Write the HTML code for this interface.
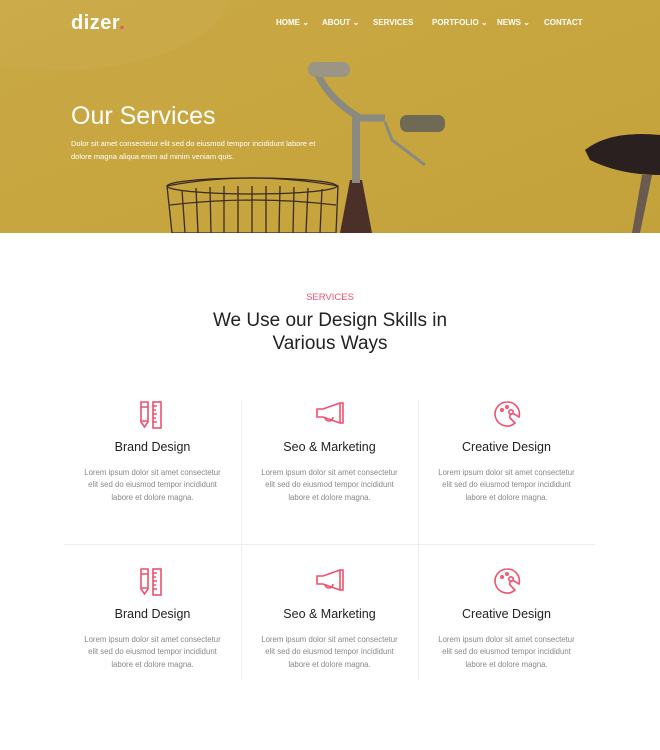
<!DOCTYPE html>
<html><head><meta charset="utf-8"><style>
*{margin:0;padding:0;box-sizing:border-box}
body{width:660px;height:750px;background:#fff;font-family:"Liberation Sans",sans-serif;position:relative;overflow:hidden}
.hero{position:absolute;left:0;top:0;width:660px;height:233px;background:linear-gradient(160deg,#c9a945 0%,#c7a53f 50%,#c4a23b 100%);overflow:hidden}
.logo{position:absolute;left:71px;top:12px;color:#fff;font-size:20px;font-weight:bold;letter-spacing:0.5px}
.logo span{color:#f0506e}
.nav{position:absolute;top:18px;color:#fff;font-size:8px;font-weight:bold}
h1{position:absolute;left:71px;top:102px;color:#fff;font-size:25px;font-weight:normal}
.sub{position:absolute;left:71px;top:138px;color:#fff;font-size:7.5px;line-height:12.5px}
.tag{position:absolute;top:292px;width:660px;text-align:center;color:#f0506e;font-size:9.5px}
h2{position:absolute;top:309px;width:660px;text-align:center;color:#222;font-size:19px;font-weight:normal;line-height:23px}
.card{position:absolute;width:177px;text-align:center}
.card h3{font-size:12.5px;font-weight:normal;color:#222;margin-top:11px}
.card p{font-size:7.8px;color:#888;line-height:12.3px;margin-top:13px}
.icon{display:block;margin:0 auto;height:30px}
.vl{position:absolute;width:1px;background:#eee}
</style></head><body>
<div class="hero">
<svg width="660" height="233" style="position:absolute;left:0;top:0">
<ellipse cx="60" cy="-10" rx="170" ry="80" fill="#cfb053" opacity="0.35"/>
<g stroke="#3a2a22" stroke-width="1.3" fill="none">
<path d="M167 186 Q250 170 338 186 L336 233 L172 233 Z"/>
<ellipse cx="252" cy="186" rx="85" ry="8"/>
<path d="M182 190L185 233M196 188L198 233M210 187L211 233M224 186L224 233M238 186L238 233M252 186L252 233M266 186L266 233M280 186L279 233M294 187L293 233M308 188L306 233M322 189L320 233M170 205Q252 195 336 205"/>
</g>
<path d="M340 233L350 180L362 180L372 233Z" fill="#4a3028"/>
<rect x="352" y="118" width="8" height="65" fill="#8a8a80"/>
<path d="M318 75Q330 100 360 118L385 118" stroke="#8a8a80" stroke-width="7" fill="none"/>
<rect x="308" y="62" width="42" height="15" rx="7" fill="#9a9585"/>
<rect x="400" y="115" width="45" height="17" rx="7" fill="#6e6a55"/>
<path d="M385 122L392 140L425 165" stroke="#8a8a80" stroke-width="3" fill="none"/>
<path d="M585 150Q610 130 660 135L660 175Q620 175 590 160Z" fill="#2a2020"/>
<path d="M642 175L632 233L640 233L652 175Z" fill="#6a5a50"/>
</svg>
<div class="logo">dizer<span>.</span></div>
<div class="nav" style="left:276px">HOME ⌄</div>
<div class="nav" style="left:322px">ABOUT ⌄</div>
<div class="nav" style="left:373px">SERVICES</div>
<div class="nav" style="left:432px">PORTFOLIO ⌄</div>
<div class="nav" style="left:497px">NEWS ⌄</div>
<div class="nav" style="left:544px">CONTACT</div>
<h1>Our Services</h1>
<div class="sub">Dolor sit amet consectetur elit sed do eiusmod tempor incididunt labore et<br>dolore magna aliqua enim ad minim veniam quis.</div>
</div>
<div class="tag">SERVICES</div>
<h2>We Use our Design Skills in<br>Various Ways</h2>
<div class="vl" style="left:241px;top:400px;height:280px"></div>
<div class="vl" style="left:418px;top:400px;height:280px"></div>
<div style="position:absolute;left:64px;top:544px;width:531px;height:1px;background:#eee"></div>

<div class="card" style="left:64px;top:399px">
<svg class="icon" width="30" height="30" viewBox="0 0 30 30" fill="none" stroke="#f0506e" stroke-width="1.6"><path d="M3 3h7v20l-3.5 5l-3.5-5z M3 8h7 M3 22h7"/><rect x="15" y="3" width="8" height="26"/><path d="M15 7h4M15 11h3M15 15h4M15 19h3M15 23h4"/></svg>
<h3>Brand Design</h3><p>Lorem ipsum dolor sit amet consectetur<br>elit sed do eiusmod tempor incididunt<br>labore et dolore magna.</p></div>
<div class="card" style="left:241px;top:399px">
<svg class="icon" width="30" height="30" viewBox="0 0 30 30" fill="none" stroke="#f0506e" stroke-width="1.6"><path d="M2 10h6l17-6v20l-17-6h-6z M25 4h3v20h-3 M10 18a4 4 0 0 0 8 0"/></svg>
<h3>Seo &amp; Marketing</h3><p>Lorem ipsum dolor sit amet consectetur<br>elit sed do eiusmod tempor incididunt<br>labore et dolore magna.</p></div>
<div class="card" style="left:418px;top:399px">
<svg class="icon" width="30" height="30" viewBox="0 0 30 30" fill="none" stroke="#f0506e" stroke-width="1.6"><path d="M15 3a12 12 0 1 0 8 21l-5-5a3 3 0 0 1 4-4l5 3A12 12 0 0 0 15 3z"/><circle cx="10" cy="11" r="1.2"/><circle cx="15" cy="8" r="1.2"/><circle cx="19" cy="13" r="2.2"/></svg>
<h3>Creative Design</h3><p>Lorem ipsum dolor sit amet consectetur<br>elit sed do eiusmod tempor incididunt<br>labore et dolore magna.</p></div>

<div class="card" style="left:64px;top:566px">
<svg class="icon" width="30" height="30" viewBox="0 0 30 30" fill="none" stroke="#f0506e" stroke-width="1.6"><path d="M3 3h7v20l-3.5 5l-3.5-5z M3 8h7 M3 22h7"/><rect x="15" y="3" width="8" height="26"/><path d="M15 7h4M15 11h3M15 15h4M15 19h3M15 23h4"/></svg>
<h3>Brand Design</h3><p>Lorem ipsum dolor sit amet consectetur<br>elit sed do eiusmod tempor incididunt<br>labore et dolore magna.</p></div>
<div class="card" style="left:241px;top:566px">
<svg class="icon" width="30" height="30" viewBox="0 0 30 30" fill="none" stroke="#f0506e" stroke-width="1.6"><path d="M2 10h6l17-6v20l-17-6h-6z M25 4h3v20h-3 M10 18a4 4 0 0 0 8 0"/></svg>
<h3>Seo &amp; Marketing</h3><p>Lorem ipsum dolor sit amet consectetur<br>elit sed do eiusmod tempor incididunt<br>labore et dolore magna.</p></div>
<div class="card" style="left:418px;top:566px">
<svg class="icon" width="30" height="30" viewBox="0 0 30 30" fill="none" stroke="#f0506e" stroke-width="1.6"><path d="M15 3a12 12 0 1 0 8 21l-5-5a3 3 0 0 1 4-4l5 3A12 12 0 0 0 15 3z"/><circle cx="10" cy="11" r="1.2"/><circle cx="15" cy="8" r="1.2"/><circle cx="19" cy="13" r="2.2"/></svg>
<h3>Creative Design</h3><p>Lorem ipsum dolor sit amet consectetur<br>elit sed do eiusmod tempor incididunt<br>labore et dolore magna.</p></div>
</body></html>
